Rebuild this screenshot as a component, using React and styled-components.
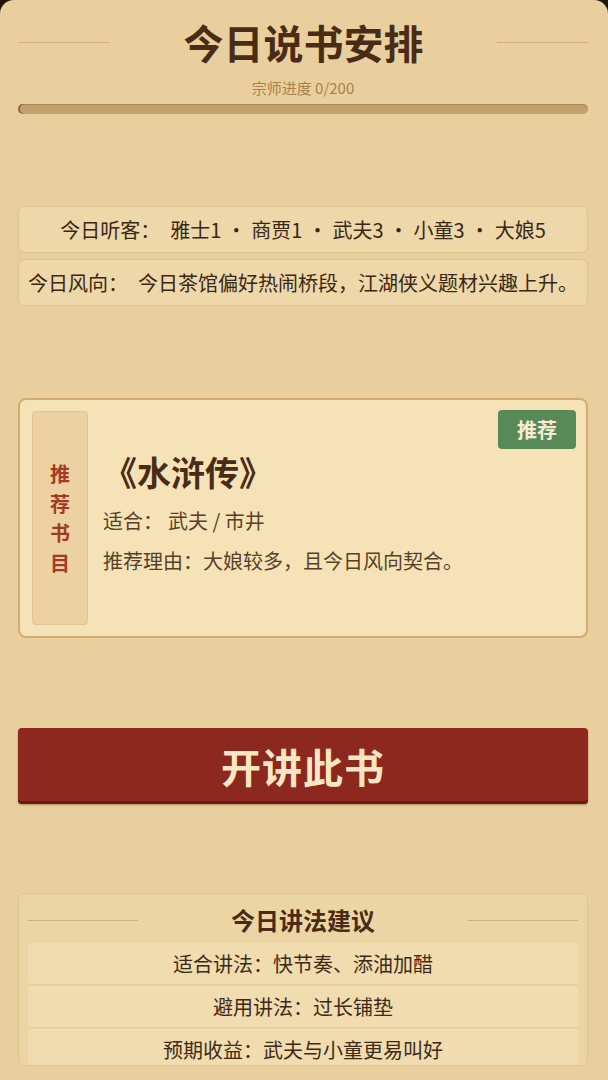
import React from "react";
import styled, { createGlobalStyle } from "styled-components";

const GlobalStyle = createGlobalStyle`
  html, body {
    margin: 0;
    padding: 0;
    background: #24160c;
  }
  body {
    font-family: "Noto Sans CJK SC", "Noto Sans", sans-serif;
    color: #3c2817;
  }
`;

const Screen = styled.div`
  background: #e8cf9d;
  border-radius: 14px 14px 0 0;
  min-height: 1120px;
  padding: 14px 20px 40px 18px;
  box-sizing: border-box;
  display: flex;
  flex-direction: column;
`;

const TitleRow = styled.div`
  display: flex;
  align-items: center;
`;

const Rule = styled.div`
  flex: 0 0 ${(p) => p.$w}px;
  height: 1px;
  background: #d2b07c;
`;

const Title = styled.h1`
  flex: 1;
  margin: 0;
  text-align: center;
  font-size: 40px;
  line-height: 56px;
  font-weight: 700;
  color: #4a2c16;
`;

const Progress = styled.div`
  margin-top: 8px;
  text-align: center;
  font-size: 15px;
  line-height: 20px;
  color: #a8804e;
`;

const Bar = styled.div`
  margin-top: 6px;
  height: 10px;
  border-radius: 5px;
  background: #c3a16d;
  box-shadow: inset 2px 0 0 #8e6c40, inset 0 1px 1px rgba(90, 60, 30, 0.25);
`;

const InfoBox = styled.div`
  margin-top: ${(p) => p.$top}px;
  height: 47px;
  box-sizing: border-box;
  border: 1px solid #dfc38f;
  border-radius: 6px;
  background: #eed7a8;
  display: flex;
  align-items: center;
  justify-content: center;
  font-size: 20px;
  white-space: nowrap;
  color: #3a2816;
`;

const Label = styled.span`
  margin-right: ${(p) => p.$gap ?? 10}px;
`;

const Dot = styled.span`
  margin: 0 5px;
`;

const Card = styled.div`
  position: relative;
  margin-top: 92px;
  height: 240px;
  box-sizing: border-box;
  border: 2px solid #d5ac6f;
  border-radius: 8px;
  background: #f5e3b7;
  padding: 11px 12px;
  display: flex;
  gap: 15px;
`;

const SideTag = styled.div`
  flex: 0 0 56px;
  box-sizing: border-box;
  border: 1px solid #e2c591;
  border-radius: 4px;
  background: #ecd2a2;
  display: flex;
  flex-direction: column;
  align-items: center;
  justify-content: center;
  font-size: 20px;
  line-height: 29.5px;
  font-weight: 700;
  color: #a53a22;
`;

const Badge = styled.div`
  position: absolute;
  top: 10px;
  right: 10px;
  width: 78px;
  height: 39px;
  border-radius: 4px;
  background: #578a58;
  color: #f6ecd2;
  font-size: 20px;
  font-weight: 700;
  display: flex;
  align-items: center;
  justify-content: center;
`;

const Body = styled.div`
  flex: 1;
  padding-top: 37px;
`;

const BookTitle = styled.div`
  font-size: 34px;
  line-height: 48px;
  font-weight: 700;
  color: #4a2c16;
`;

const Line = styled.div`
  margin-top: ${(p) => p.$top}px;
  font-size: 20px;
  line-height: 28px;
  color: #5a3f28;
`;

const StartButton = styled.button`
  margin-top: 90px;
  height: 76px;
  border: none;
  border-radius: 4px;
  background: #8c281d;
  box-shadow: inset 0 -3px 0 #6b1b12, 0 1px 2px rgba(60, 30, 10, 0.35);
  color: #f9e6c4;
  font-family: inherit;
  font-size: 40px;
  font-weight: 700;
  letter-spacing: 1px;
  padding: 0;
`;

const Panel = styled.div`
  margin-top: 89px;
  height: 173px;
  overflow: hidden;
  box-sizing: border-box;
  border: 1px solid #dfc38f;
  border-radius: 6px;
  background: #ecd5a5;
  padding: 9px 9px 0;
  display: flex;
  flex-direction: column;
`;

const PanelTitle = styled.h2`
  flex: 1;
  margin: 0;
  text-align: center;
  font-size: 24px;
  line-height: 34px;
  font-weight: 700;
  color: #4a2c16;
`;

const Rows = styled.div`
  margin-top: 6px;
  display: flex;
  flex-direction: column;
  gap: 1px;
`;

const Row = styled.div`
  flex: 0 0 42px;
  box-sizing: border-box;
  background: #f0dcae;
  border-bottom: 1px solid rgba(190, 150, 90, 0.22);
  border-radius: 3px;
  display: flex;
  align-items: center;
  justify-content: center;
  font-size: 20px;
  color: #3e2a18;
`;

const audience = [
  ["雅士", 1],
  ["商贾", 1],
  ["武夫", 3],
  ["小童", 3],
  ["大娘", 5],
];

const tips = [
  "适合讲法：快节奏、添油加醋",
  "避用讲法：过长铺垫",
  "预期收益：武夫与小童更易叫好",
];

export default function App() {
  return (
    <>
      <GlobalStyle />
      <Screen>
        <TitleRow>
          <Rule $w={92} />
          <Title>今日说书安排</Title>
          <Rule $w={91} />
        </TitleRow>
        <Progress>宗师进度 0/200</Progress>
        <Bar />

        <InfoBox $top={92}>
          <Label>今日听客：</Label>
          {audience.map(([name, n], i) => (
            <React.Fragment key={name}>
              {i > 0 && <Dot>·</Dot>}
              <span>
                {name}
                {n}
              </span>
            </React.Fragment>
          ))}
        </InfoBox>
        <InfoBox $top={6}>
          <Label>今日风向：</Label>
          <span>今日茶馆偏好热闹桥段，江湖侠义题材兴趣上升。</span>
        </InfoBox>

        <Card>
          <SideTag>
            <span>推</span>
            <span>荐</span>
            <span>书</span>
            <span>目</span>
          </SideTag>
          <Body>
            <BookTitle>《水浒传》</BookTitle>
            <Line $top={11}>
              <Label $gap={5}>适合：</Label>武夫 / 市井
            </Line>
            <Line $top={12}>推荐理由：大娘较多，且今日风向契合。</Line>
          </Body>
          <Badge>推荐</Badge>
        </Card>

        <StartButton>开讲此书</StartButton>

        <Panel>
          <TitleRow>
            <Rule $w={110} />
            <PanelTitle>今日讲法建议</PanelTitle>
            <Rule $w={110} />
          </TitleRow>
          <Rows>
            {tips.map((t) => (
              <Row key={t}>{t}</Row>
            ))}
          </Rows>
        </Panel>
      </Screen>
    </>
  );
}
